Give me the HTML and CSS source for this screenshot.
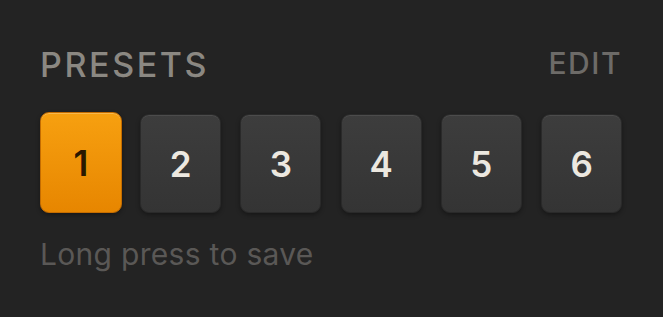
FILE: index.html
```html
<!DOCTYPE html>
<html>
<head>
    <title>Presets</title>
    <link rel="stylesheet" href="styles.css">
</head>
<body>
    <div class="panel">
        <div class="header">
            <span class="title">PRESETS</span>
            <span class="edit">EDIT</span>
        </div>
        <div class="presets">
            <button class="preset active">1</button>
            <button class="preset">2</button>
            <button class="preset">3</button>
            <button class="preset">4</button>
            <button class="preset">5</button>
            <button class="preset">6</button>
        </div>
        <div class="hint">Long press to save</div>
    </div>
</body>
</html>
```

FILE: styles.css
```css
html, body {
    margin: 0;
    background: #232323;
}
body {
    font-family: Inter, "Liberation Sans", sans-serif;
    width: 663px;
    height: 317px;
    overflow: hidden;
}
.panel {
    padding: 44px 41px 0 40px;
}
.header {
    display: flex;
    justify-content: space-between;
    align-items: center;
    height: 40px;
}
.title {
    font-size: 34px;
    font-weight: 500;
    letter-spacing: 2.6px;
    color: #8b8882;
}
.edit {
    font-size: 30px;
    font-weight: 500;
    letter-spacing: 1.5px;
    color: #6d6b68;
    margin-bottom: 2px;
}
.presets {
    display: flex;
    gap: 19.4px;
    margin-top: 28px;
}
.preset {
    width: 81px;
    height: 99px;
    border: 1px solid #2a2a2a;
    border-radius: 9px;
    background: linear-gradient(#3d3d3d, #343434);
    box-shadow: inset 0 1px 0 rgba(255,255,255,0.08), 0 2px 4px rgba(0,0,0,0.35);
    color: #ece8e0;
    font-family: inherit;
    font-size: 35px;
    font-weight: 600;
    padding: 0;
    margin: 2px 0 0 0;
}
.preset.active {
    width: 82px;
    height: 101px;
    margin-top: 0;
    margin-right: -1px;
    border: 1px solid #c46c00;
    background: linear-gradient(#f7a010, #e78600);
    box-shadow: inset 0 1px 0 rgba(255,255,255,0.25), 0 2px 4px rgba(0,0,0,0.35);
    color: #2a1800;
}
.hint {
    margin-top: 23px;
    font-size: 30px;
    letter-spacing: 0.3px;
    color: #5a5856;
}
```
